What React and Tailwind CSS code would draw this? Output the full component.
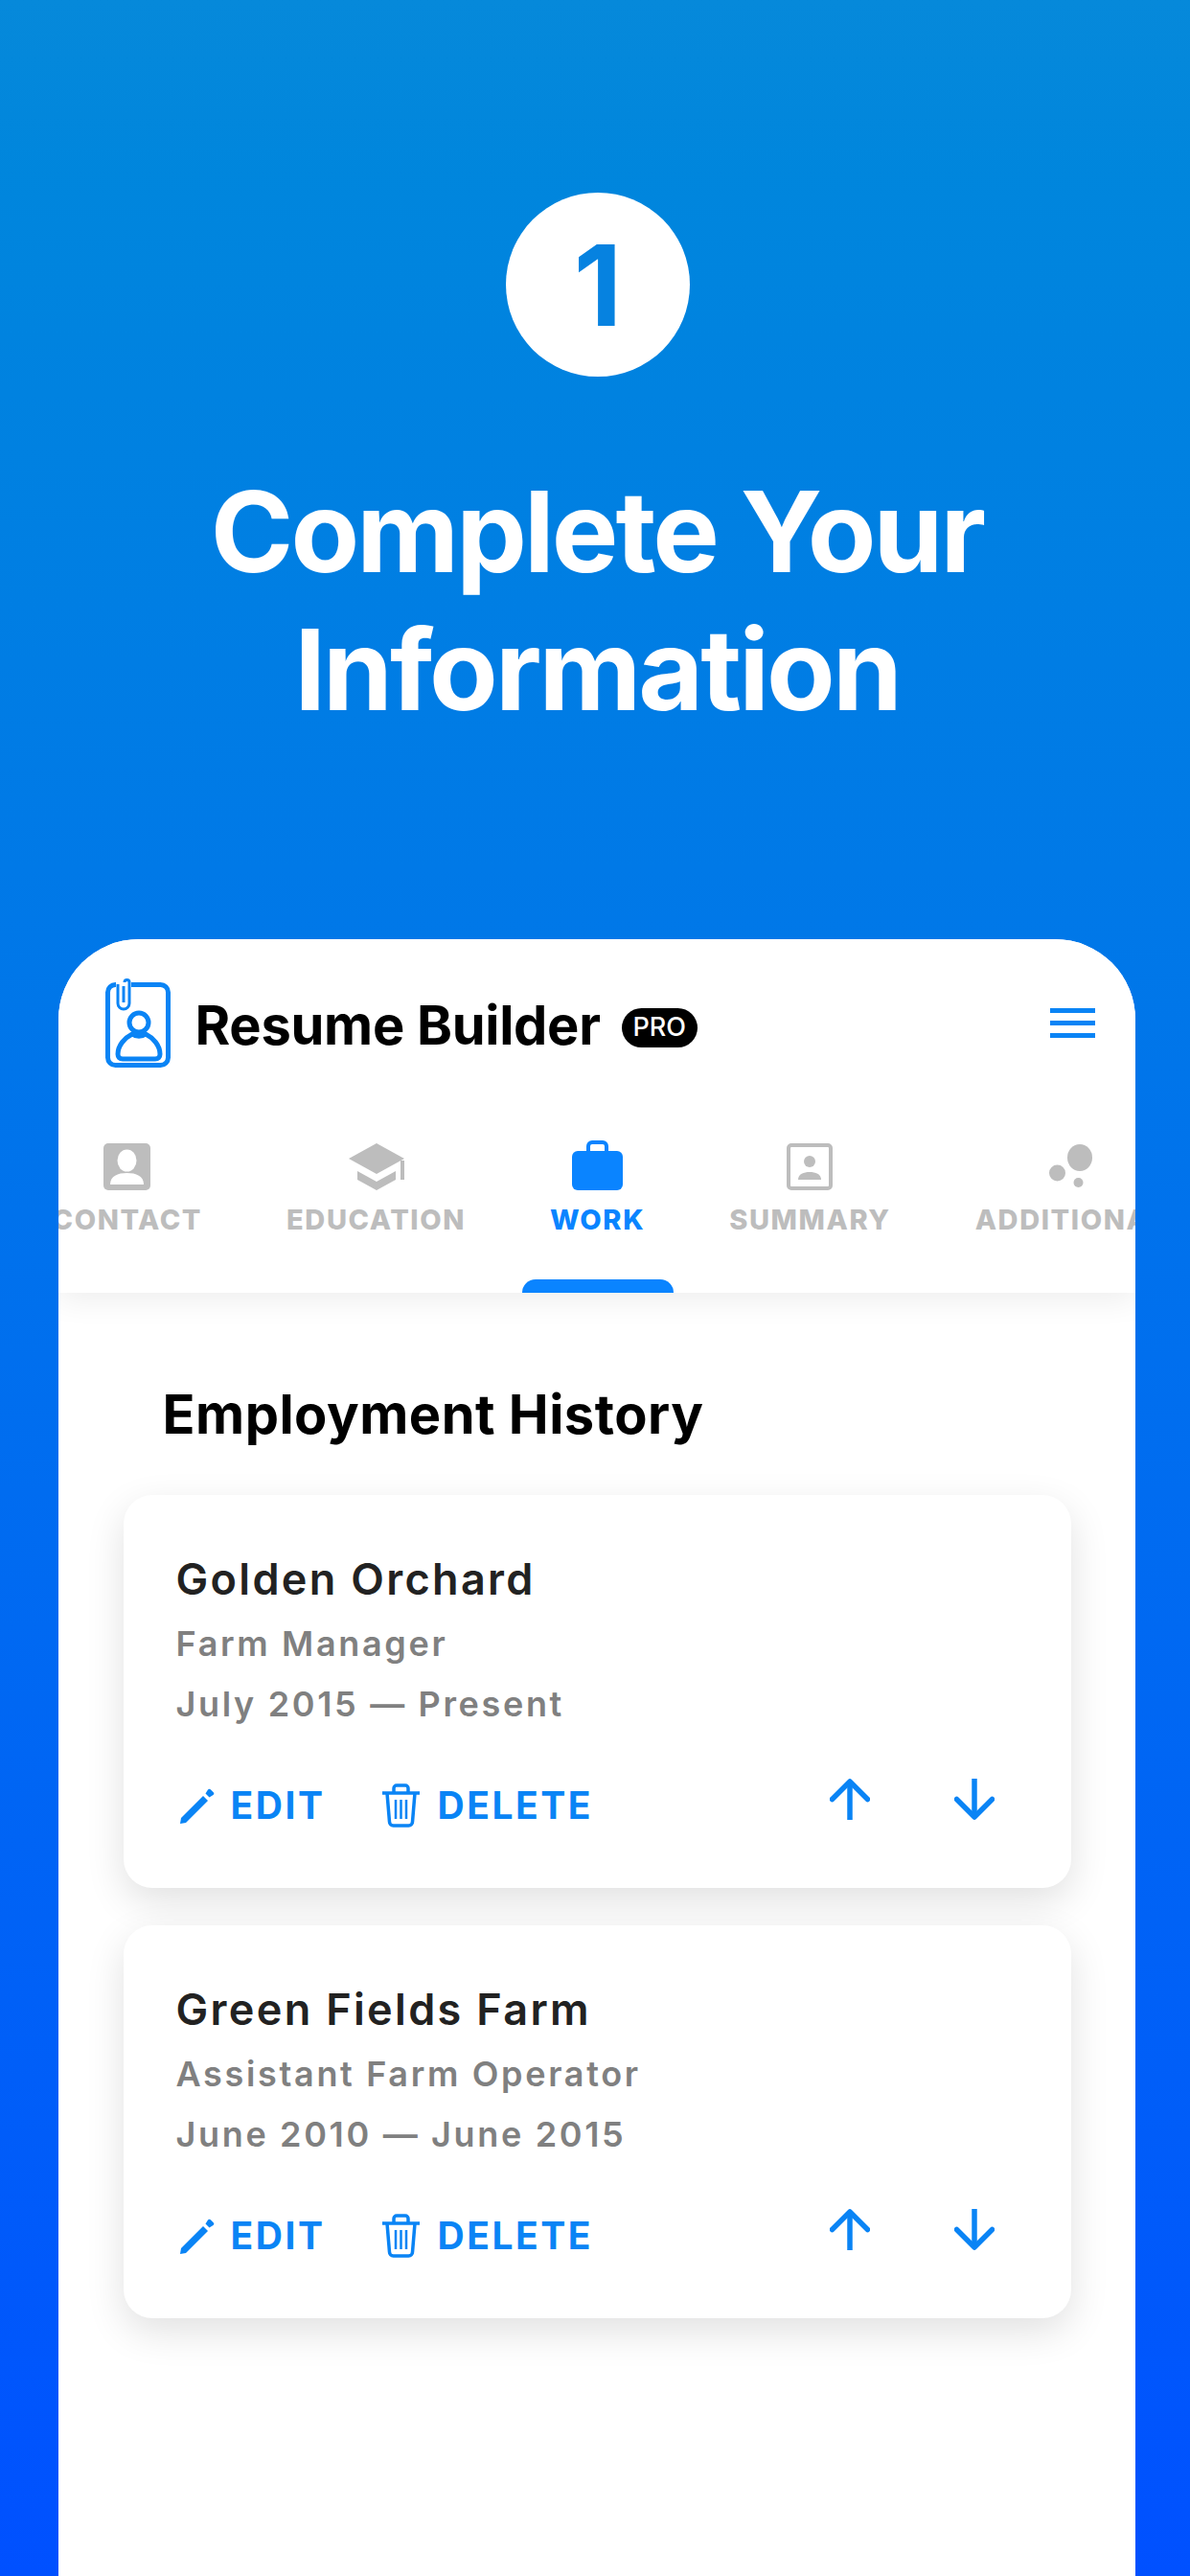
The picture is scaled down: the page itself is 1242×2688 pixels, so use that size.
const BLUE = "#0a84f5";

function Logo() {
  return (
    <svg width="68" height="93" viewBox="0 0 68 93" fill="none" stroke={BLUE} strokeWidth="5" className="shrink-0">
      <rect x="2.5" y="6.5" width="63" height="84" rx="8" />
      <rect x="11" y="0" width="16" height="34" fill="#fff" stroke="none" />
      <path strokeWidth="3" d="M19 8v17M13 6v20a6 6 0 0 0 12 0V4a2.5 2.5 0 0 0-5 0" />
      <circle cx="35" cy="46" r="10" />
      <path d="M13 79c0-9 7-17 15-21 4 3 10 3 14 0 8 4 15 12 15 21 0 3-2 5-5 5H18c-3 0-5-2-5-5z" />
    </svg>
  );
}

function ContactIcon() {
  return (
    <svg width="49" height="49" viewBox="0 0 49 49">
      <rect width="49" height="49" rx="5" fill="#bdbdbd" />
      <ellipse cx="24.5" cy="18" rx="10" ry="11.500" fill="#fff" />
      <path d="M7 43c0-9 8-12 17.500-12S42 34 42 43z" fill="#fff" />
    </svg>
  );
}

function EducationIcon() {
  return (
    <svg width="58" height="49" viewBox="0 0 58 49" fill="#bdbdbd">
      <path d="M29 0 58 16 29 32 0 16z" />
      <path d="M9 29 29 40 49 29v9L29 49 9 38z" />
      <rect x="54" y="18" width="4" height="20" />
    </svg>
  );
}

function WorkIcon() {
  return (
    <svg width="53" height="52" viewBox="0 0 53 52">
      <path d="M17 11V6a4 4 0 0 1 4-4h11a4 4 0 0 1 4 4v5" fill="none" stroke="#0a84ff" strokeWidth="4" />
      <rect y="11" width="53" height="41" rx="6" fill="#0a84ff" />
    </svg>
  );
}

function SummaryIcon() {
  return (
    <svg width="48" height="49" viewBox="0 0 48 49">
      <rect x="2" y="2" width="44" height="45" rx="3" fill="none" stroke="#bdbdbd" strokeWidth="4" />
      <circle cx="24" cy="19" r="6" fill="#bdbdbd" />
      <path d="M12 38c0-6 6-8 12-8s12 2 12 8z" fill="#bdbdbd" />
    </svg>
  );
}

function AdditionalIcon() {
  return (
    <svg width="45" height="49" viewBox="0 0 45 49" fill="#bdbdbd">
      <ellipse cx="32" cy="15" rx="13" ry="14" />
      <ellipse cx="8.500" cy="31" rx="8.500" ry="8.500" />
      <circle cx="30.500" cy="41" r="5" />
    </svg>
  );
}

function Tab({ icon, label, active }) {
  return (
    <div className="relative flex shrink-0 flex-col items-center">
      <div className="flex h-[52px] items-end">{icon}</div>
      <span
        className={
          "mt-[15px] text-[29px] leading-[32px] font-extrabold tracking-[0.055em] whitespace-nowrap " +
          (active ? "text-[#0a84ff]" : "text-[#bdbdbd]")
        }
      >
        {label}
      </span>
      {active && (
        <div className="absolute bottom-[-60px] left-1/2 h-[14px] w-[158px] -translate-x-1/2 rounded-t-[14px] bg-[#0a84ff]" />
      )}
    </div>
  );
}

function Pencil() {
  return (
    <svg width="36" height="37" viewBox="0 0 36 37" className="ml-1 shrink-0" fill={BLUE}>
      <path d="M0 37l1-6L24 8l5 5L6 36z" />
      <path d="M26.500 5.500l2.500-4a2 2 0 0 1 3 0l2.500 2.500a2 2 0 0 1 0 3l-4 2.500z" />
    </svg>
  );
}

function Trash() {
  return (
    <svg width="39" height="46" viewBox="0 0 39 46" fill="none" stroke={BLUE} strokeWidth="3.500" className="shrink-0">
      <path d="M0 10h39M12 9V5a3 3 0 0 1 3-3h9a3 3 0 0 1 3 3v4" />
      <path d="M5 10l2.500 30a4 4 0 0 0 4 4h16a4 4 0 0 0 4-4L34 10" />
      <path d="M14 17v20M19.500 17v20M25 17v20" strokeWidth="2.500" />
    </svg>
  );
}

function ArrowUp() {
  return (
    <svg width="42" height="43" viewBox="0 0 42 43" fill="none" stroke={BLUE} strokeWidth="5.500" strokeLinecap="round" strokeLinejoin="round">
      <path d="M21 43V3" strokeLinecap="butt" />
      <path d="M2.500 21.500 21 3l18.500 18.500" />
    </svg>
  );
}

function ArrowDown() {
  return (
    <svg width="42" height="43" viewBox="0 0 42 43" fill="none" stroke={BLUE} strokeWidth="5.500" strokeLinecap="round" strokeLinejoin="round">
      <path d="M21 0v40" strokeLinecap="butt" />
      <path d="M2.500 21.500 21 40l18.500-18.500" />
    </svg>
  );
}

function JobCard({ company, role, dates }) {
  return (
    <div className="ml-[68px] h-[410px] w-[989px] rounded-[30px] bg-white pt-[63px] pl-[55px] shadow-[0_14px_40px_rgba(0,0,0,0.12)]">
      <div className="text-[45px] leading-[50px] font-semibold tracking-[0.052em] text-[#222222]">{company}</div>
      <div className="mt-[21px] text-[36px] leading-[42px] font-semibold tracking-[0.074em] text-[#808080]">{role}</div>
      <div className="mt-[21px] text-[36px] leading-[42px] font-semibold tracking-[0.074em] text-[#808080]">{dates}</div>
      <div className="mt-[62px] flex h-[46px] items-center pr-[80px]">
        <Pencil />
        <span className="ml-[17px] text-[39px] leading-[46px] font-bold tracking-[0.065em] text-[#0a84f5]">EDIT</span>
        <div className="ml-[60px] flex items-center">
          <Trash />
          <span className="ml-[18px] text-[39px] leading-[46px] font-bold tracking-[0.065em] text-[#0a84f5]">DELETE</span>
        </div>
        <div className="ml-auto flex -translate-y-[7px] items-center gap-[88px]">
          <ArrowUp />
          <ArrowDown />
        </div>
      </div>
    </div>
  );
}

export default function App() {
  return (
    <div
      className="flex h-[2688px] w-[1242px] flex-col items-center overflow-hidden bg-gradient-to-b from-[#0689da] to-[#0050ff] pt-[201px] pl-[3px]"
      style={{ fontFamily: "Inter, 'Noto Sans', sans-serif" }}
    >
      <div className="ml-[3px] flex h-[192px] w-[192px] items-center justify-center rounded-full bg-white text-[117px] leading-none font-bold text-[#0682e0]">
        1
      </div>
      <h1 className="mt-[90px] ml-[1px] text-center text-[117px] leading-[144px] font-bold tracking-[-0.025em] text-white">
        Complete Your
        <br />
        Information
      </h1>
      <div className="mt-[209px] w-[1124px] flex-1 overflow-hidden rounded-t-[84px] bg-white">
        <div className="relative z-10 h-[369px] bg-white shadow-[0_8px_30px_rgba(0,0,0,0.07)]">
          <div className="flex h-[210px] items-start pt-[41px] pr-[42px] pl-[49px]">
            <Logo />
            <span className="mt-[15px] ml-[26px] text-[56px] leading-[68px] font-bold tracking-[-0.005em] text-black">
              Resume Builder
            </span>
            <span className="mt-[31px] ml-[22px] flex h-[41px] w-[79px] items-center justify-center rounded-full bg-black text-[27px] font-medium text-white">
              PRO
            </span>
            <div className="mt-[31px] ml-auto flex h-[31px] w-[47px] flex-col justify-between">
              <div className="h-[5px] bg-[#0a84f5]" />
              <div className="h-[5px] bg-[#0a84f5]" />
              <div className="h-[5px] bg-[#0a84f5]" />
            </div>
          </div>
          <div className="h-[159px] overflow-hidden">
            <div className="-ml-[6px] flex gap-[88px]">
              <Tab icon={<ContactIcon />} label="CONTACT" />
              <Tab icon={<EducationIcon />} label="EDUCATION" />
              <Tab icon={<WorkIcon />} label="WORK" active />
              <Tab icon={<SummaryIcon />} label="SUMMARY" />
              <Tab icon={<AdditionalIcon />} label="ADDITIONAL" />
            </div>
          </div>
        </div>
        <div className="mt-[93px] mb-[50px] ml-[109px] text-[56px] leading-[68px] font-bold tracking-[0.009em] text-black">
          Employment History
        </div>
        <div className="flex flex-col gap-[39px]">
          <JobCard company="Golden Orchard" role="Farm Manager" dates="July 2015 — Present" />
          <JobCard company="Green Fields Farm" role="Assistant Farm Operator" dates="June 2010 — June 2015" />
        </div>
      </div>
    </div>
  );
}
